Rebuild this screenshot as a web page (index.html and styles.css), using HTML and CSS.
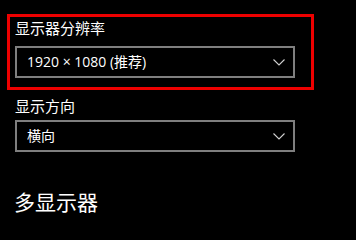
FILE: index.html
```html
<!DOCTYPE html>
<html lang="zh-CN">
<head>
<meta charset="utf-8">
<title>显示设置</title>
<link rel="stylesheet" href="styles.css">
</head>
<body>
<div class="page">
  <div class="highlight">
    <div class="label">显示器分辨率</div>
    <div class="select">
      <span class="value">1920 × 1080 (推荐)</span>
      <svg class="chev" width="12" height="7" viewBox="0 0 12 7"><polyline points="0.5,0.5 6,6 11.5,0.5" fill="none" stroke="#d0d0d0" stroke-width="1.1"/></svg>
    </div>
  </div>
  <div class="label label2">显示方向</div>
  <div class="select select2">
    <span class="value">横向</span>
    <svg class="chev" width="12" height="7" viewBox="0 0 12 7"><polyline points="0.5,0.5 6,6 11.5,0.5" fill="none" stroke="#d0d0d0" stroke-width="1.1"/></svg>
  </div>
  <div class="heading">多显示器</div>
</div>
</body>
</html>
```
FILE: styles.css
```css
html, body {
  margin: 0;
  padding: 0;
  background: #000;
}
body {
  width: 356px;
  height: 225px;
  overflow: hidden;
  color: #fff;
  font-family: "Open Sans", "Noto Sans CJK SC", sans-serif;
}
.page {
  padding: 14px 0 0 7px;
}
.highlight {
  box-sizing: border-box;
  width: 307px;
  height: 76px;
  border: 3px solid #ee0000;
  padding: 1px 0 0 5px;
}
.label {
  font-size: 15px;
  line-height: 20px;
  height: 20px;
  font-family: "Noto Sans CJK SC", sans-serif;
}
.label2 {
  margin: 6px 0 0 8px;
}
.select {
  box-sizing: border-box;
  width: 280px;
  height: 32px;
  margin-top: 8px;
  border: 2px solid #7f7f7f;
  display: flex;
  align-items: center;
  justify-content: space-between;
  padding: 0 8px 0 10px;
}
.select2 {
  margin: 4px 0 0 8px;
}
.value {
  font-size: 14px;
  line-height: 20px;
}
.chev {
  display: block;
  margin-top: 1px;
}
.heading {
  margin: 35px 0 0 7px;
  font-size: 21px;
  line-height: 28px;
  font-family: "Noto Sans CJK SC", sans-serif;
}
```
